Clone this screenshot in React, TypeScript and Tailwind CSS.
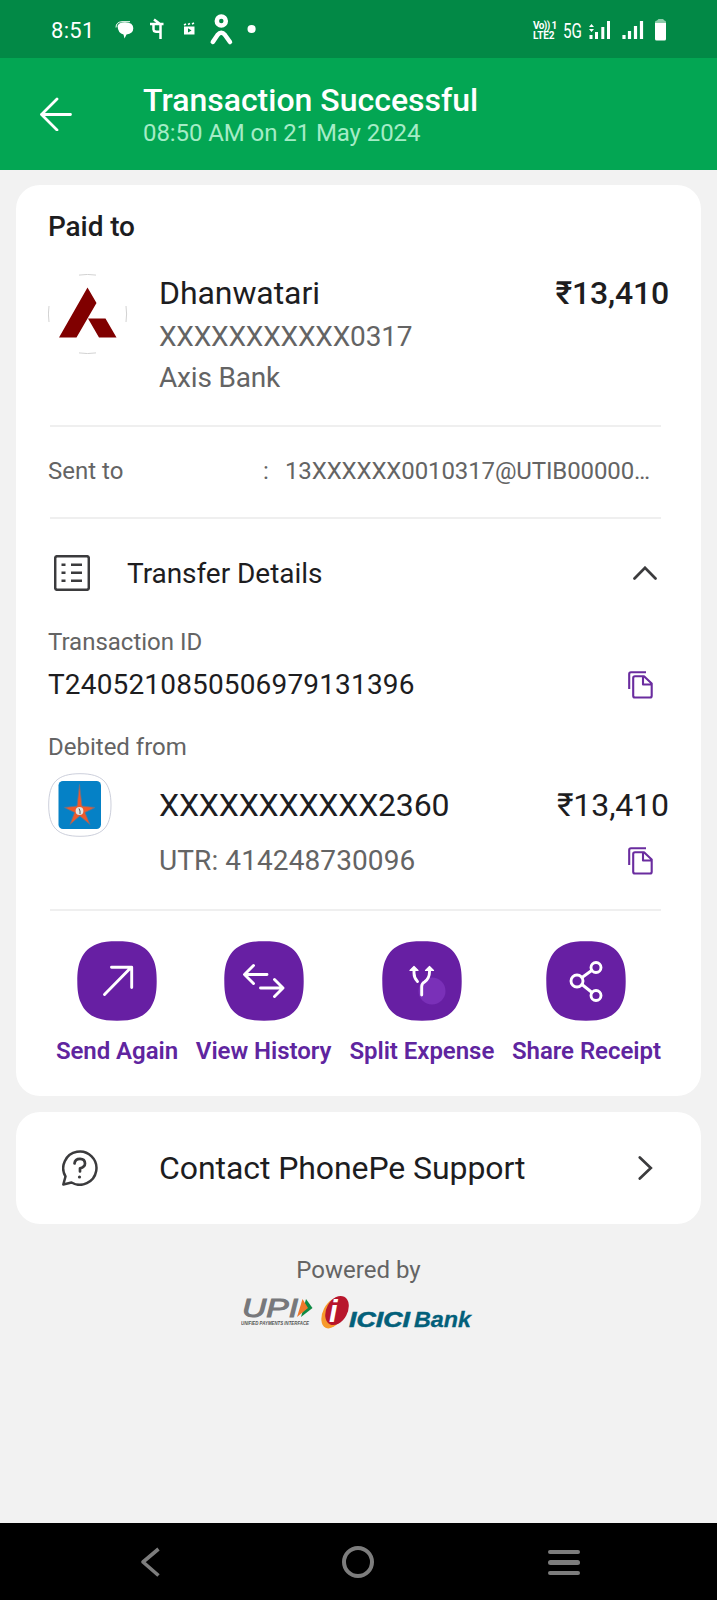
import React from 'react';

interface Action {
  label: string;
  labelClass: string;
  icon: React.ReactNode;
}

const StatusBar: React.FC = () => (
  <div className="flex h-[58px] items-center bg-[#028946] pl-[51px] pr-[51px] pt-[4px] text-white">
    <span className="w-[64px] text-[22px] leading-7 tracking-[0.3px] whitespace-nowrap">8:51</span>
    <svg className="h-[34px] w-[142px] shrink-0" viewBox="0 0 142 34" fill="none">
      {/* chat bubble */}
      <path d="M2.500 12Q3.500 8.200 10 8.200Q18.300 8.200 18.300 14.200Q18.300 19.500 11.500 20.500L9.500 24.500L8.500 20.500Q3 19.500 2.500 12Z" fill="#fff" />
      <path d="M1 13.500Q1 8 7 7.700H15" stroke="#fff" strokeWidth="1" />
      {/* PhonePe mark */}
      <path d="M35 10H48.500M39 5.500L45 10M45.500 10V25M38.500 10V15.500Q38.500 18.500 45.500 17.500" stroke="#fff" strokeWidth="2.500" />
      {/* clapper */}
      <path d="M69 12.500H79.500V20.500H69Z" fill="#fff" />
      <path d="M69 11L71 10M73 10.500L75 9.500M77 10L79 9" stroke="#fff" strokeWidth="1.600" />
      <path d="M73 14.300V18.500L76.500 16.500Z" fill="#028946" />
      {/* person */}
      <circle cx="106.300" cy="7" r="4.500" stroke="#fff" strokeWidth="4.500" />
      <path d="M97.800 28L102.500 21Q106.300 16.500 110 21L115 28" stroke="#fff" strokeWidth="4.500" strokeLinecap="round" />
      <circle cx="136.600" cy="15" r="4.100" fill="#fff" />
    </svg>
    <div className="ml-auto flex items-center">
      <div className="flex w-[26px] flex-col text-[10px] leading-[10px] font-bold">
        <span className="whitespace-nowrap tracking-[-0.6px]">Vo)) 1</span>
        <span className="whitespace-nowrap tracking-[-0.1px]">LTE2</span>
      </div>
      <svg className="h-[28px] w-[107px] shrink-0" viewBox="0 0 107 28">
        <text x="4" y="21" fontSize="20" textLength="19" lengthAdjust="spacingAndGlyphs" fill="#fff">5G</text>
        <path d="M30 10L32.500 7L35 10ZM30 12L32.500 15L35 12Z" fill="#fff" />
        <path d="M32 18V22M37.500 15V22M43.800 10V22M49.500 4V22" stroke="#fff" strokeWidth="3" />
        <path d="M65 18V22M70.500 14V22M76.500 9V22M82.500 4V22" stroke="#fff" strokeWidth="3.200" />
        <path d="M96 5Q96 3.500 98 3.500L99.500 2H104L105.500 3.500Q107 3.500 107 5V7H96Z" fill="#8ccdaa" />
        <path d="M96 6H107V22Q107 23.500 105.500 23.500H97.500Q96 23.500 96 22Z" fill="#fff" />
      </svg>
    </div>
  </div>
);

const Header: React.FC = () => (
  <header className="flex h-[112px] bg-[#03a653]">
    <button className="flex h-full w-[143px] items-center pl-[39px]">
      <svg className="h-[34px] w-[33px]" viewBox="0 0 33 34" fill="none" stroke="#fff" strokeWidth="2.800" strokeLinecap="round" strokeLinejoin="round">
        <path d="M18 2L2.500 17.500L18 33M2.500 17.500H31.500" />
      </svg>
    </button>
    <div className="pt-6 whitespace-nowrap">
      <h1 className="text-[32px] leading-9 font-medium text-white">Transaction Successful</h1>
      <p className="mt-px text-[24px] leading-7 tracking-[-0.08px] text-[#a5ecc6]">08:50 AM on 21 May 2024</p>
    </div>
  </header>
);

const Divider: React.FC = () => <div className="ml-[2px] h-[2px] w-[611px] bg-[#efefef]" />;

const CopyIcon: React.FC = () => (
  <svg className="mr-[16px] h-[28px] w-[25px]" viewBox="0 0 25 28" fill="none" stroke="#6a2c9f" strokeWidth="2.100">
    <path d="M18 1.300H3Q1.200 1.300 1.200 3V18" />
    <path d="M16 5.300H7Q5.200 5.300 5.200 7V24.700Q5.200 26.500 7 26.500H22Q23.700 26.500 23.700 24.700V12.500ZM15 5.300V13.500H23.700" strokeLinejoin="round" />
  </svg>
);

const AxisLogo: React.FC = () => (
  <svg className="h-[80px] w-[80px] shrink-0" viewBox="0 0 80 80" fill="none">
    <path d="M31 1.100Q39.500 -.2 48 1.100M31 78.900Q39.500 80.200 48 78.900M1 32Q-.2 40 1 48M78 32Q79.200 40 78 48" stroke="#d2d2d2" strokeWidth="1" />
    <path d="M39.500 13.500L48.500 29L28.500 63.500H11L39.500 13.500ZM40 44.500H57.500L68.500 63.500H51Z" fill="#800000" />
  </svg>
);

const BankLogo: React.FC = () => (
  <svg className="h-[64px] w-[64px] shrink-0" viewBox="0 0 64 64">
    <path d="M.7 32C.7 9.500 9.500 .7 32 .7S63 9.500 63 32S54.500 63.300 32 63.300S.7 54.500 .7 32Z" fill="#fff" stroke="#cccfdb" strokeWidth="1" />
    <rect x="10.500" y="8" width="42.500" height="48" rx="4.500" fill="#0581c6" />
    <path d="M31.500 11.500L34 33L47 34.500L37 39.500L42 51.500L31.800 43L22 51.500L26.500 39.500L16.500 34.500L29 33Z" fill="#ee5a2b" stroke="#64728c" strokeWidth=".8" />
    <circle cx="31.500" cy="38" r="3.900" fill="#e5e5e5" />
    <path d="M31 35.500L32 38V41" stroke="#555" strokeWidth="1" fill="none" />
  </svg>
);

const actions: Action[] = [
  {
    label: 'Send Again',
    labelClass: 'w-[122px]',
    icon: <path d="M27.500 53.500L54 26.500M34.500 26.300H54.700V46.500" />,
  },
  {
    label: 'View History',
    labelClass: 'w-[136px]',
    icon: <path d="M29.500 24.500L20.500 33.500L29.500 42.500M21 33.500H43M50.500 38.500L59 47L50.500 55.500M36.500 47H58.500" />,
  },
  {
    label: 'Split Expense',
    labelClass: 'w-[145px]',
    icon: (
      <>
        <circle cx="50" cy="50" r="13.500" fill="#7a30b8" stroke="none" />
        <path d="M39.700 54V45.500Q39.700 42.500 42.500 41Q47.500 37.500 47.500 31V28M32 28V32Q32 37 35.500 40.500" />
        <path d="M28 29.500L32 25.500L36 29.500ZM43.500 29.500L47.500 25.500L51.500 29.500Z" fill="#fff" strokeWidth="1.200" />
      </>
    ),
  },
  {
    label: 'Share Receipt',
    labelClass: 'w-[149px]',
    icon: (
      <>
        <circle cx="31" cy="40" r="6" />
        <circle cx="50" cy="26.500" r="5" />
        <circle cx="50" cy="54.500" r="5" />
        <path d="M36 36.500L46 29.300M36 43.500L46 51.500" />
      </>
    ),
  },
];

const ActionButton: React.FC<Action> = ({ label, labelClass, icon }) => (
  <button className="flex flex-col items-center">
    <svg className="h-[80px] w-[80px]" viewBox="0 0 80 80" fill="none">
      <path d="M.3 40C.3 32 1 24 4 18C7 11 12 6 20 3C26 .8 32 .3 40 .3S54 .8 60 3C68 6 73 11 76 18C79 24 79.700 32 79.700 40S79 56 76 62C73 69 68 74 60 77C54 79.200 48 79.700 40 79.700S26 79.200 20 77C12 74 7 69 4 62C1 56 .3 48 .3 40Z" fill="#671fa3" />
      <g stroke="#fff" strokeWidth="2.900" strokeLinecap="round" strokeLinejoin="round">{icon}</g>
    </svg>
    <span className={`mt-4 flex justify-center text-[24px] leading-7 font-semibold tracking-[-0.04px] whitespace-nowrap text-[#5f259f] ${labelClass}`}>
      {label}
    </span>
  </button>
);

const PaymentCard: React.FC = () => (
  <section className="mx-4 mt-[15px] h-[911px] w-[685px] rounded-[24px] bg-white px-8 pt-[26px] whitespace-nowrap text-[#1d1d1f]">
    <h2 className="text-[28px] leading-8 font-medium tracking-[-0.1px]">Paid to</h2>

    <div className="mt-[30px] flex">
      <div className="w-[111px] pt-px">
        <AxisLogo />
      </div>
      <div className="text-[28px] leading-10 tracking-[-0.18px] text-[#646464]">
        <p className="text-[32px] leading-10 tracking-[-0.08px] text-[#1d1d1f]">Dhanwatari</p>
        <p className="mt-[4px]">XXXXXXXXXXX0317</p>
        <p className="mt-px">Axis Bank</p>
      </div>
      <p className="ml-auto text-[32px] leading-10 font-medium tracking-[-0.2px]">₹13,410</p>
    </div>

    <div className="pt-[27px]">
      <Divider />
    </div>
    <div className="mt-[30px] mb-8 flex text-[24px] leading-7 text-[#646464]">
      <span className="w-[215px]">Sent to</span>
      <span className="w-[22px]">:</span>
      <span className="tracking-[-0.12px]">13XXXXXX0010317@UTIB00000…</span>
    </div>
    <Divider />

    <button className="mt-9 flex h-9 w-full items-center text-[28px]">
      <svg className="ml-[6px] h-9 w-9" viewBox="0 0 36 36" fill="none" stroke="#3b3b3d" strokeWidth="2.500">
        <rect x="1.200" y="1.200" width="33.600" height="33.600" rx="2" />
        <path d="M7.500 9.800H11.500M7.500 17.800H11.500M7.500 25.800H11.500M17 9.800H28M17 17.800H28M17 25.800H28" />
      </svg>
      <span className="ml-[37px] pt-[2px] tracking-[-0.05px]">Transfer Details</span>
      <svg className="mr-[12px] ml-auto h-[14px] w-[24px]" viewBox="0 0 24 14" fill="none" stroke="#3b3b3d" strokeWidth="2.700" strokeLinecap="round">
        <path d="M1.500 12.500L12 1.800L22.500 12.500" />
      </svg>
    </button>

    <p className="mt-[37px] text-[24px] leading-7 text-[#646464]">Transaction ID</p>
    <div className="mt-[13px] flex h-8 items-center justify-between text-[28px]">
      <span className="tracking-[0.16px]">T2405210850506979131396</span>
      <CopyIcon />
    </div>

    <p className="mt-8 text-[24px] leading-7 text-[#646464]">Debited from</p>
    <div className="mt-3 flex h-16 items-center text-[32px]">
      <BankLogo />
      <span className="ml-[47px] tracking-[-0.15px]">XXXXXXXXXXX2360</span>
      <span className="ml-auto tracking-[-0.1px]">₹13,410</span>
    </div>
    <div className="mt-2 mb-8 flex h-8 items-center justify-between pl-[111px] text-[28px] text-[#646464]">
      <span className="tracking-[0.1px]">UTR: 414248730096</span>
      <CopyIcon />
    </div>
    <Divider />

    <div className="mt-[30px] ml-2 flex w-[605px] justify-between">
      {actions.map((action) => (
        <ActionButton key={action.label} {...action} />
      ))}
    </div>
  </section>
);

const SupportCard: React.FC = () => (
  <button className="mx-4 mt-4 flex h-[112px] w-[685px] items-center rounded-[24px] bg-white pl-[46px] text-[32px] text-[#1d1d1f]">
    <svg className="h-9 w-9" viewBox="0 0 36 36" fill="none" stroke="#3b3b3d" strokeWidth="2.500" strokeLinecap="round" strokeLinejoin="round">
      <path d="M3.500 26.500A16.600 16.600 0 1 1 9.500 32.500L1.300 34.500Z" />
      <path d="M12.500 13.500Q13 8.800 18 8.800Q23 8.800 23 13.500Q23 17 18 18.300V21.500" strokeWidth="2.700" />
      <circle cx="17.500" cy="27" r="1.600" fill="#3b3b3d" stroke="none" />
    </svg>
    <span className="ml-[61px] tracking-[-0.08px]">Contact PhonePe Support</span>
    <svg className="mr-[48px] ml-auto h-[24px] w-[15px]" viewBox="0 0 15 24" fill="none" stroke="#3b3b3d" strokeWidth="2.700" strokeLinecap="round">
      <path d="M1.800 1.500L12.800 12L1.800 22.500" />
    </svg>
  </button>
);

const PoweredBy: React.FC = () => (
  <footer className="mt-8 flex flex-col items-center">
    <p className="text-[24px] leading-7 text-[#646464]">Powered by</p>
    <svg className="mt-[11px] h-[36px] w-[236px]" viewBox="0 0 236 36">
      <g fontFamily="Liberation Sans, sans-serif" fontStyle="italic">
        <text x="1" y="22" fontSize="25" fill="#77787b" stroke="#77787b" strokeWidth="1" textLength="56" lengthAdjust="spacingAndGlyphs">UPI</text>
        <text x="0" y="30" fontSize="5.500" fontWeight="bold" fill="#555" textLength="68" lengthAdjust="spacingAndGlyphs">UNIFIED PAYMENTS INTERFACE</text>
      </g>
      <path d="M65 4L71.500 13L60 22Z" fill="#0e8a45" />
      <path d="M61.500 4L67 13L56 22Z" fill="#f0782a" />
      <ellipse cx="92" cy="18" rx="10" ry="16.500" transform="rotate(27 92 18)" fill="#f79a2c" />
      <ellipse cx="96" cy="15.500" rx="10.500" ry="15.500" transform="rotate(28 96 15.500)" fill="#b8162c" />
      <g fontFamily="Liberation Sans, sans-serif" fontStyle="italic" fontWeight="bold">
        <text x="88" y="26.500" fontSize="31" fill="#fff">i</text>
        <text x="108" y="31.500" fontSize="22.500" fill="#03607a" stroke="#03607a" strokeWidth=".6" textLength="61" lengthAdjust="spacingAndGlyphs">ICICI</text>
        <text x="173" y="31.500" fontSize="22.500" fill="#03607a" stroke="#03607a" strokeWidth=".3" textLength="57" lengthAdjust="spacingAndGlyphs">Bank</text>
      </g>
    </svg>
  </footer>
);

const NavBar: React.FC = () => (
  <nav className="mt-auto flex h-[77px] items-center justify-between bg-black pr-[137px] pl-[140px]">
    <svg className="h-[32px] w-[20px]" viewBox="0 0 20 32" fill="none" stroke="#7d7d7d" strokeWidth="3.600">
      <path d="M18.500 3L3 16L18.500 29.500" strokeLinejoin="round" />
    </svg>
    <div className="mr-[2px] ml-[9px] h-[32px] w-[32px] rounded-full border-4 border-[#7d7d7d]" />
    <div className="flex w-[32px] flex-col gap-[6px] pt-[2px]">
      <span className="h-[4.500px] rounded-full bg-[#7d7d7d]" />
      <span className="h-[4.500px] rounded-full bg-[#7d7d7d]" />
      <span className="h-[4.500px] rounded-full bg-[#7d7d7d]" />
    </div>
  </nav>
);

const App: React.FC = () => {
  return (
    <div className="flex h-[1600px] w-[717px] flex-col overflow-hidden bg-[#f2f2f2] font-['Roboto',sans-serif]">
      <StatusBar />
      <Header />
      <PaymentCard />
      <SupportCard />
      <PoweredBy />
      <NavBar />
    </div>
  );
};

export default App;
